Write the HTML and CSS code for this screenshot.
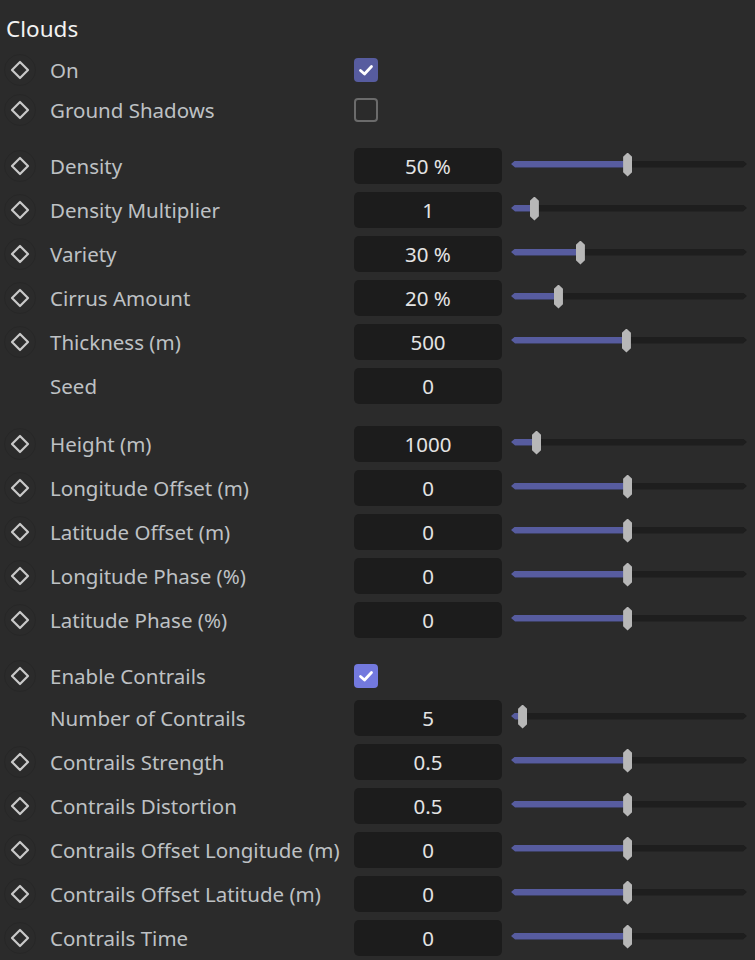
FILE: index.html
```html
<!DOCTYPE html>
<html lang="en">
<head>
    <meta charset="UTF-8">
    <title>Clouds</title>
    <link rel="stylesheet" href="styles.css">
</head>
<body>
    <div class="panel">
        <h2 class="title">Clouds</h2>

        <!-- toggles -->
        <div class="group">
            <div class="row row-check">
                <span class="key"><svg width="20" height="20" viewBox="0 0 20 20"><path d="M10 2 L18 10 L10 18 L2 10 Z" fill="none" stroke="#cacaca" stroke-width="2.2" stroke-linejoin="round"/></svg></span>
                <span class="label">On</span>
                <span class="check checked"><svg width="24" height="24" viewBox="0 0 24 24"><path d="M6.5 12.5 L10.5 16 L17.5 8.5" fill="none" stroke="#fff" stroke-width="2.8" stroke-linecap="round" stroke-linejoin="round"/></svg></span>
            </div>
            <div class="row row-check">
                <span class="key"><svg width="20" height="20" viewBox="0 0 20 20"><path d="M10 2 L18 10 L10 18 L2 10 Z" fill="none" stroke="#cacaca" stroke-width="2.2" stroke-linejoin="round"/></svg></span>
                <span class="label">Ground Shadows</span>
                <span class="check"></span>
            </div>
        </div>

        <!-- shape -->
        <div class="group">
            <div class="row">
                <span class="key"><svg width="20" height="20" viewBox="0 0 20 20"><path d="M10 2 L18 10 L10 18 L2 10 Z" fill="none" stroke="#cacaca" stroke-width="2.2" stroke-linejoin="round"/></svg></span>
                <span class="label">Density</span>
                <span class="value">50 %</span>
                <span class="slider"><span class="track"><span class="fill" style="width: 49.2%"></span></span><span class="thumb" style="left: 49.2%"></span></span>
            </div>
            <div class="row">
                <span class="key"><svg width="20" height="20" viewBox="0 0 20 20"><path d="M10 2 L18 10 L10 18 L2 10 Z" fill="none" stroke="#cacaca" stroke-width="2.2" stroke-linejoin="round"/></svg></span>
                <span class="label">Density Multiplier</span>
                <span class="value">1</span>
                <span class="slider"><span class="track"><span class="fill" style="width: 9.7%"></span></span><span class="thumb" style="left: 9.7%"></span></span>
            </div>
            <div class="row">
                <span class="key"><svg width="20" height="20" viewBox="0 0 20 20"><path d="M10 2 L18 10 L10 18 L2 10 Z" fill="none" stroke="#cacaca" stroke-width="2.2" stroke-linejoin="round"/></svg></span>
                <span class="label">Variety</span>
                <span class="value">30 %</span>
                <span class="slider"><span class="track"><span class="fill" style="width: 29.2%"></span></span><span class="thumb" style="left: 29.2%"></span></span>
            </div>
            <div class="row">
                <span class="key"><svg width="20" height="20" viewBox="0 0 20 20"><path d="M10 2 L18 10 L10 18 L2 10 Z" fill="none" stroke="#cacaca" stroke-width="2.2" stroke-linejoin="round"/></svg></span>
                <span class="label">Cirrus Amount</span>
                <span class="value">20 %</span>
                <span class="slider"><span class="track"><span class="fill" style="width: 19.9%"></span></span><span class="thumb" style="left: 19.9%"></span></span>
            </div>
            <div class="row">
                <span class="key"><svg width="20" height="20" viewBox="0 0 20 20"><path d="M10 2 L18 10 L10 18 L2 10 Z" fill="none" stroke="#cacaca" stroke-width="2.2" stroke-linejoin="round"/></svg></span>
                <span class="label">Thickness (m)</span>
                <span class="value">500</span>
                <span class="slider"><span class="track"><span class="fill" style="width: 48.7%"></span></span><span class="thumb" style="left: 48.7%"></span></span>
            </div>
            <div class="row">
                <span class="key"></span>
                <span class="label">Seed</span>
                <span class="value">0</span>
            </div>
        </div>

        <!-- placement -->
        <div class="group">
            <div class="row">
                <span class="key"><svg width="20" height="20" viewBox="0 0 20 20"><path d="M10 2 L18 10 L10 18 L2 10 Z" fill="none" stroke="#cacaca" stroke-width="2.2" stroke-linejoin="round"/></svg></span>
                <span class="label">Height (m)</span>
                <span class="value">1000</span>
                <span class="slider"><span class="track"><span class="fill" style="width: 10.6%"></span></span><span class="thumb" style="left: 10.6%"></span></span>
            </div>
            <div class="row">
                <span class="key"><svg width="20" height="20" viewBox="0 0 20 20"><path d="M10 2 L18 10 L10 18 L2 10 Z" fill="none" stroke="#cacaca" stroke-width="2.2" stroke-linejoin="round"/></svg></span>
                <span class="label">Longitude Offset (m)</span>
                <span class="value">0</span>
                <span class="slider"><span class="track"><span class="fill" style="width: 49.2%"></span></span><span class="thumb" style="left: 49.2%"></span></span>
            </div>
            <div class="row">
                <span class="key"><svg width="20" height="20" viewBox="0 0 20 20"><path d="M10 2 L18 10 L10 18 L2 10 Z" fill="none" stroke="#cacaca" stroke-width="2.2" stroke-linejoin="round"/></svg></span>
                <span class="label">Latitude Offset (m)</span>
                <span class="value">0</span>
                <span class="slider"><span class="track"><span class="fill" style="width: 49.2%"></span></span><span class="thumb" style="left: 49.2%"></span></span>
            </div>
            <div class="row">
                <span class="key"><svg width="20" height="20" viewBox="0 0 20 20"><path d="M10 2 L18 10 L10 18 L2 10 Z" fill="none" stroke="#cacaca" stroke-width="2.2" stroke-linejoin="round"/></svg></span>
                <span class="label">Longitude Phase (%)</span>
                <span class="value">0</span>
                <span class="slider"><span class="track"><span class="fill" style="width: 49.2%"></span></span><span class="thumb" style="left: 49.2%"></span></span>
            </div>
            <div class="row">
                <span class="key"><svg width="20" height="20" viewBox="0 0 20 20"><path d="M10 2 L18 10 L10 18 L2 10 Z" fill="none" stroke="#cacaca" stroke-width="2.2" stroke-linejoin="round"/></svg></span>
                <span class="label">Latitude Phase (%)</span>
                <span class="value">0</span>
                <span class="slider"><span class="track"><span class="fill" style="width: 49.2%"></span></span><span class="thumb" style="left: 49.2%"></span></span>
            </div>
        </div>

        <!-- contrails -->
        <div class="group group-last">
            <div class="row row-check">
                <span class="key"><svg width="20" height="20" viewBox="0 0 20 20"><path d="M10 2 L18 10 L10 18 L2 10 Z" fill="none" stroke="#cacaca" stroke-width="2.2" stroke-linejoin="round"/></svg></span>
                <span class="label">Enable Contrails</span>
                <span class="check checked hover"><svg width="24" height="24" viewBox="0 0 24 24"><path d="M6.5 12.5 L10.5 16 L17.5 8.5" fill="none" stroke="#fff" stroke-width="2.8" stroke-linecap="round" stroke-linejoin="round"/></svg></span>
            </div>
            <div class="row">
                <span class="key"></span>
                <span class="label">Number of Contrails</span>
                <span class="value">5</span>
                <span class="slider"><span class="track"><span class="fill" style="width: 4.7%"></span></span><span class="thumb" style="left: 4.7%"></span></span>
            </div>
            <div class="row">
                <span class="key"><svg width="20" height="20" viewBox="0 0 20 20"><path d="M10 2 L18 10 L10 18 L2 10 Z" fill="none" stroke="#cacaca" stroke-width="2.2" stroke-linejoin="round"/></svg></span>
                <span class="label">Contrails Strength</span>
                <span class="value">0.5</span>
                <span class="slider"><span class="track"><span class="fill" style="width: 49.2%"></span></span><span class="thumb" style="left: 49.2%"></span></span>
            </div>
            <div class="row">
                <span class="key"><svg width="20" height="20" viewBox="0 0 20 20"><path d="M10 2 L18 10 L10 18 L2 10 Z" fill="none" stroke="#cacaca" stroke-width="2.2" stroke-linejoin="round"/></svg></span>
                <span class="label">Contrails Distortion</span>
                <span class="value">0.5</span>
                <span class="slider"><span class="track"><span class="fill" style="width: 49.2%"></span></span><span class="thumb" style="left: 49.2%"></span></span>
            </div>
            <div class="row">
                <span class="key"><svg width="20" height="20" viewBox="0 0 20 20"><path d="M10 2 L18 10 L10 18 L2 10 Z" fill="none" stroke="#cacaca" stroke-width="2.2" stroke-linejoin="round"/></svg></span>
                <span class="label">Contrails Offset Longitude (m)</span>
                <span class="value">0</span>
                <span class="slider"><span class="track"><span class="fill" style="width: 49.2%"></span></span><span class="thumb" style="left: 49.2%"></span></span>
            </div>
            <div class="row">
                <span class="key"><svg width="20" height="20" viewBox="0 0 20 20"><path d="M10 2 L18 10 L10 18 L2 10 Z" fill="none" stroke="#cacaca" stroke-width="2.2" stroke-linejoin="round"/></svg></span>
                <span class="label">Contrails Offset Latitude (m)</span>
                <span class="value">0</span>
                <span class="slider"><span class="track"><span class="fill" style="width: 49.2%"></span></span><span class="thumb" style="left: 49.2%"></span></span>
            </div>
            <div class="row">
                <span class="key"><svg width="20" height="20" viewBox="0 0 20 20"><path d="M10 2 L18 10 L10 18 L2 10 Z" fill="none" stroke="#cacaca" stroke-width="2.2" stroke-linejoin="round"/></svg></span>
                <span class="label">Contrails Time</span>
                <span class="value">0</span>
                <span class="slider"><span class="track"><span class="fill" style="width: 49.2%"></span></span><span class="thumb" style="left: 49.2%"></span></span>
            </div>
        </div>
    </div>
</body>
</html>
```

FILE: styles.css
```css
:root {
    --bg: #2b2b2b;
    --field: #1c1c1c;
    --track: #1e1e1e;
    --accent: #575c9f;
    --accent-hover: #7379de;
    --label: #bec1c4;
    --value: #e4e4e4;
}
html, body {
    margin: 0;
    padding: 0;
    background-color: var(--bg);
    font-family: "Noto Sans", "Open Sans", sans-serif;
}
.panel {
    width: 755px;
    padding-right: 8px;
    box-sizing: border-box;
}
.title {
    margin: 0;
    height: 50px;
    padding: 14px 0 0 6px;
    box-sizing: border-box;
    font-size: 22.5px;
    font-weight: normal;
    line-height: 30px;
    color: #f2f2f2;
}
.group + .group {
    margin-top: 14px;
}
.row {
    display: flex;
    align-items: center;
    height: 44px;
}
.row-check {
    height: 40px;
}
.key {
    width: 32px;
    height: 32px;
    margin: 0 14px 0 4px;
    flex-shrink: 0;
    display: flex;
    align-items: center;
    justify-content: center;
}
.key svg {
    display: block;
}
.key:has(svg) {
    border: 1px solid #272727;
    border-radius: 50%;
    box-sizing: border-box;
}
.label {
    width: 304px;
    font-size: 20.5px;
    color: var(--label);
    white-space: nowrap;
}
.check {
    width: 24px;
    height: 24px;
    border-radius: 4px;
    border: 2px solid #6b6b6b;
    box-sizing: border-box;
    display: flex;
    align-items: center;
    justify-content: center;
}
.check.checked {
    border: none;
    background-color: var(--accent);
}
.check.hover {
    background-color: var(--accent-hover);
}
.check svg {
    display: block;
}
.value {
    width: 148px;
    height: 36px;
    flex-shrink: 0;
    border-radius: 5px;
    background-color: var(--field);
    color: var(--value);
    font-size: 20.5px;
    line-height: 36px;
    text-align: center;
}
.slider {
    position: relative;
    flex: 1;
    height: 7px;
    margin: 0 0 4px 9px;
}
.slider .track {
    display: block;
    position: relative;
    height: 100%;
    background-color: var(--track);
    clip-path: polygon(4px 0, calc(100% - 4px) 0, 100% 50%, calc(100% - 4px) 100%, 4px 100%, 0 50%);
}
.slider .fill {
    position: absolute;
    left: 0;
    top: 0;
    bottom: 0;
    background-color: var(--accent);
}
.slider .thumb {
    position: absolute;
    top: -8px;
    width: 9px;
    height: 24px;
    margin-left: -4px;
    background-color: #b7b7b7;
    border-radius: 2px;
    clip-path: polygon(50% 0, 100% 18%, 100% 82%, 50% 100%, 0 82%, 0 18%);
}
```
